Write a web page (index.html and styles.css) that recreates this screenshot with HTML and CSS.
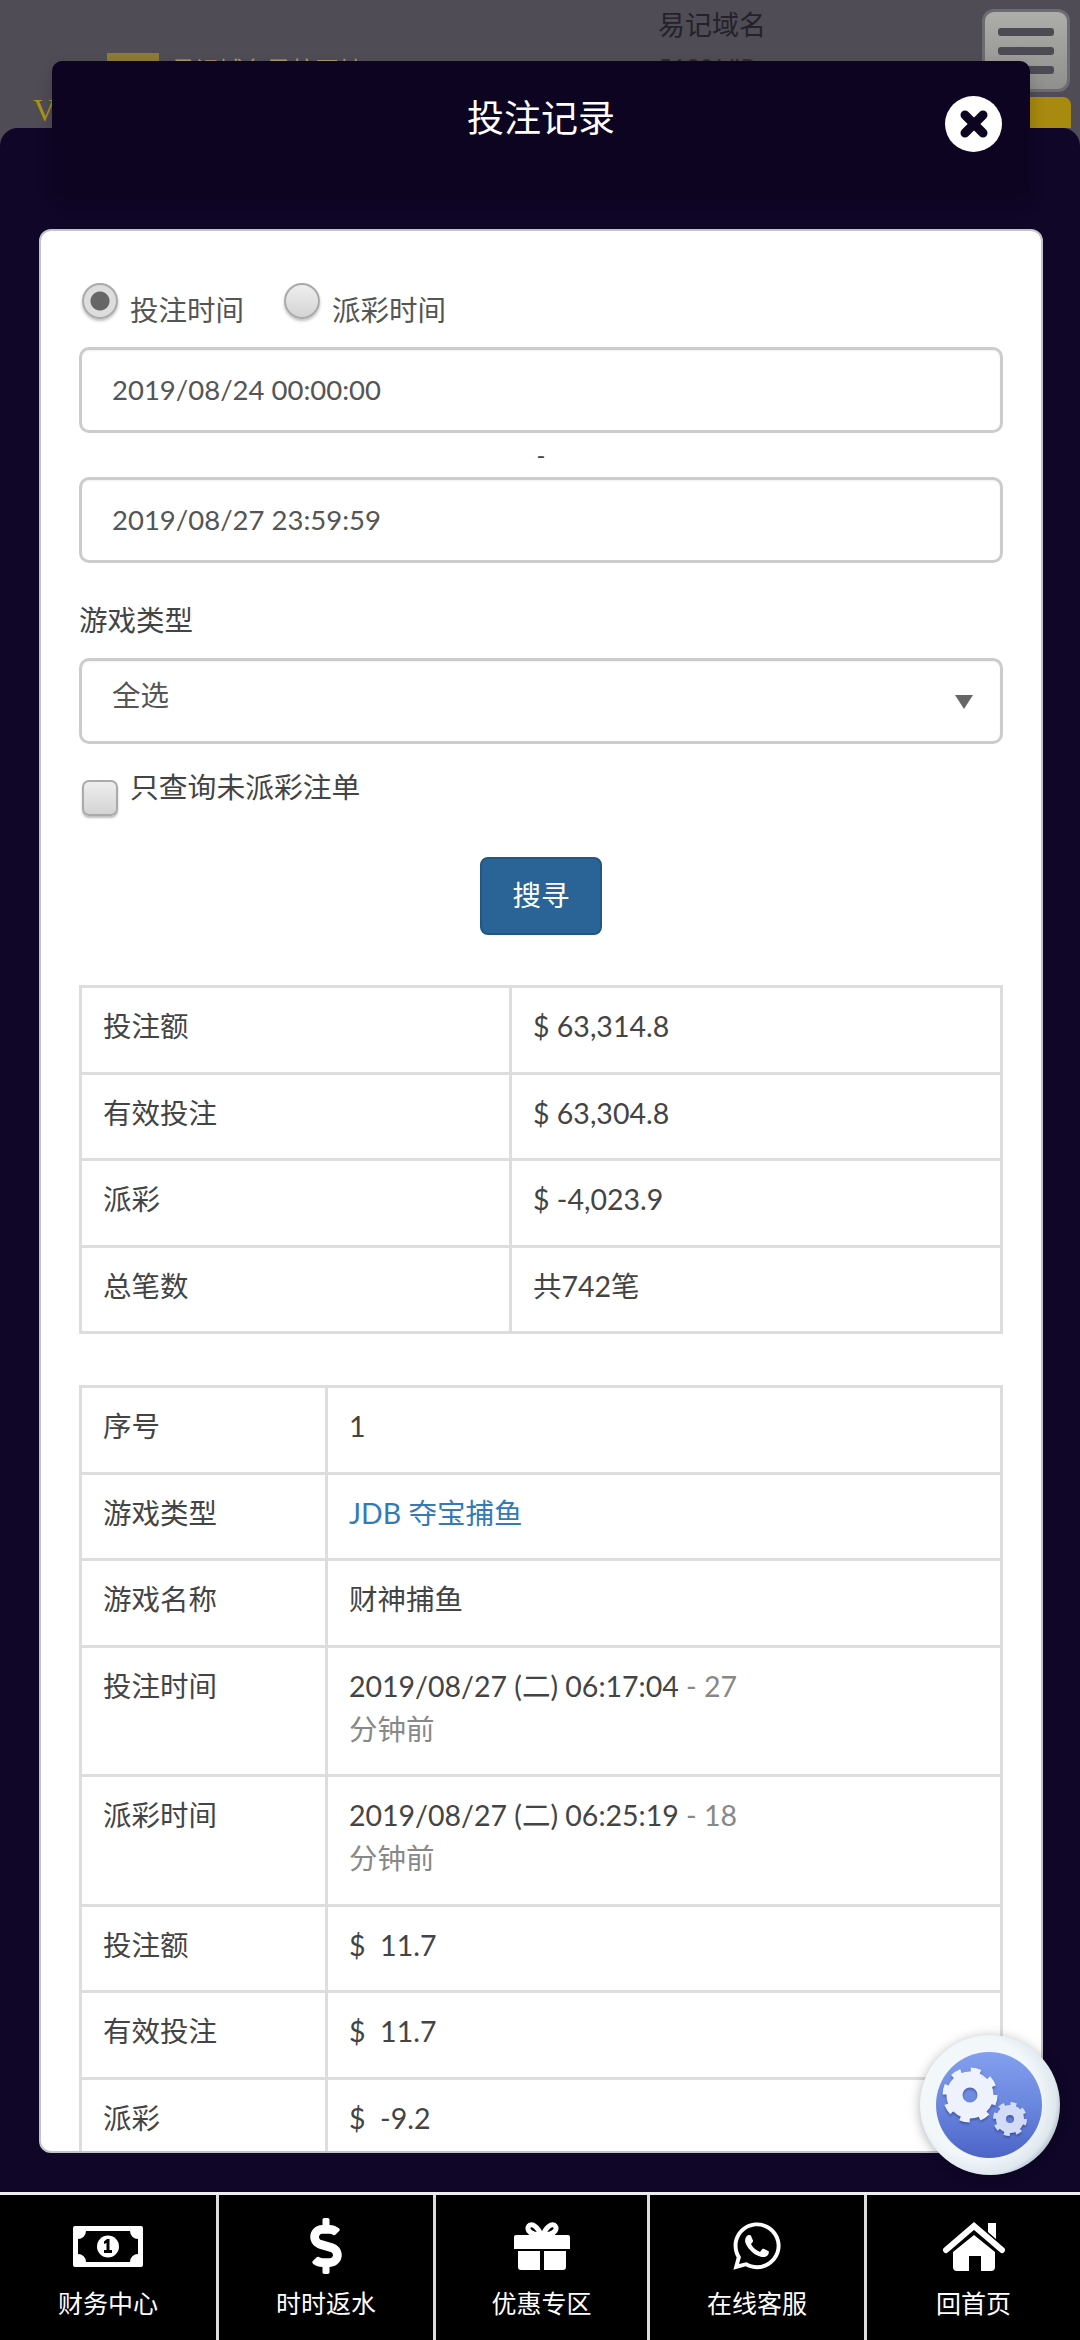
FILE: index.html
```html
<!DOCTYPE html>
<html lang="zh">
<head>
<meta charset="utf-8">
<title>投注记录</title>
<link rel="stylesheet" href="styles.css">
</head>
<body>
<div class="app">
  <header class="topbar">
    <div class="v-mark">V</div>
    <div class="logo"><span class="logo-art"></span><span class="logo-text">易记域名导航网址</span></div>
    <div class="domain"><div class="domain-title">易记域名</div><div class="domain-sub">5130.VIP</div></div>
    <div class="menu-btn"><i></i><i></i><i></i></div>
    <div class="gold-btn"></div>
  </header>

  <div class="modal-head">
    <h1 class="modal-title">投注记录</h1>
    <span class="close-btn">
      <svg viewBox="0 0 30 30" width="30" height="30"><path d="M6 6 24 24M24 6 6 24" fill="none" stroke="#0d0422" stroke-width="9" stroke-linecap="round"/></svg>
    </span>
  </div>

  <main class="sheet">
    <section class="card">
      <div class="radios">
        <label class="radio-item"><input class="radio" type="radio" name="t" checked><span>投注时间</span></label>
        <label class="radio-item"><input class="radio" type="radio" name="t"><span>派彩时间</span></label>
      </div>
      <div class="field date">2019/08/24 00:00:00</div>
      <div class="sep">-</div>
      <div class="field date">2019/08/27 23:59:59</div>
      <div class="type-label">游戏类型</div>
      <div class="field select"><span class="select-text">全选</span><span class="arrow"></span></div>
      <label class="check-row"><input class="check" type="checkbox"><span>只查询未派彩注单</span></label>
      <div class="btn-row"><button class="search" type="button">搜寻</button></div>

      <table class="tbl summary">
        <tr><td>投注额</td><td>$ 63,314.8</td></tr>
        <tr><td>有效投注</td><td>$ 63,304.8</td></tr>
        <tr><td>派彩</td><td>$ -4,023.9</td></tr>
        <tr><td>总笔数</td><td>共742笔</td></tr>
      </table>

      <table class="tbl detail">
        <tr><td>序号</td><td>1</td></tr>
        <tr><td>游戏类型</td><td class="link">JDB 夺宝捕鱼</td></tr>
        <tr><td>游戏名称</td><td>财神捕鱼</td></tr>
        <tr><td>投注时间</td><td>2019/08/27 (二) 06:17:04 <span class="muted">- 27<br>分钟前</span></td></tr>
        <tr><td>派彩时间</td><td>2019/08/27 (二) 06:25:19 <span class="muted">- 18<br>分钟前</span></td></tr>
        <tr><td>投注额</td><td>$&nbsp; 11.7</td></tr>
        <tr><td>有效投注</td><td>$&nbsp; 11.7</td></tr>
        <tr><td>派彩</td><td>$&nbsp; -9.2</td></tr>
      </table>
    </section>
  </main>

  <div class="fab">
    <svg viewBox="0 0 140 140" width="140" height="140">
      <defs>
        <linearGradient id="fabBlue" x1="0" y1="0" x2="0" y2="1">
          <stop offset="0" stop-color="#839fee"/><stop offset=".5" stop-color="#6a87df"/><stop offset="1" stop-color="#4c64c6"/>
        </linearGradient>
        <radialGradient id="fabRim" cx=".42" cy=".45" r=".6">
          <stop offset=".7" stop-color="#f2f7fa"/><stop offset=".92" stop-color="#dfe8ef"/><stop offset="1" stop-color="#b4c0cc"/>
        </radialGradient>
      </defs>
      <circle cx="70" cy="70" r="70" fill="url(#fabRim)"/>
      <circle cx="69" cy="70" r="53" fill="url(#fabBlue)"/>
      <g class="gears">
        <circle cx="50" cy="60" r="15.500" fill="none" stroke="#eef2fd" stroke-width="16"/>
        <circle cx="50" cy="60" r="25" fill="none" stroke="#eef2fd" stroke-width="5" stroke-dasharray="9.820 9.815"/>
        <circle cx="90" cy="84" r="9" fill="none" stroke="#d3dcf7" stroke-width="10"/>
        <circle cx="90" cy="84" r="15" fill="none" stroke="#d3dcf7" stroke-width="4" stroke-dasharray="5.890 5.890"/>
      </g>
    </svg>
  </div>

  <nav class="footer">
    <a class="tab">
      <span class="ico-box"><svg viewBox="0 0 70 41" width="70" height="41"><path fill="#fff" fill-rule="evenodd" d="M2 0h66a2 2 0 0 1 2 2v37a2 2 0 0 1-2 2H2a2 2 0 0 1-2-2V2a2 2 0 0 1 2-2zm11 5a8 8 0 0 1-8 8v15a8 8 0 0 1 8 8h44a8 8 0 0 1 8-8V13a8 8 0 0 1-8-8z"/><circle cx="35" cy="20.500" r="11" fill="#fff"/><path d="M36.500 13v11h2.500v3h-8v-3h2.500v-7l-2.500 1v-2.500l3-2.500z" fill="#000"/></svg></span>
      <span class="tab-label">财务中心</span>
    </a>
    <a class="tab">
      <span class="ico-box"><svg viewBox="0 0 288 512" width="32" height="56"><path fill="#fff" d="M209.200 233.400l-108-31.600C88.700 198.200 80 186.500 80 173.500c0-16.300 13.200-29.500 29.500-29.500h66.300c12.200 0 24.200 3.700 34.200 10.500 6.100 4.100 14.300 3.100 19.500-2l34.800-34c7.100-6.900 6.100-18.400-1.800-24.500C238 74.800 207.400 64.100 176 64V16c0-8.800-7.200-16-16-16h-32c-8.800 0-16 7.200-16 16v48h-2.500C45.800 64-5.400 118.700.5 183.600c4.200 46.100 39.400 83.600 83.800 96.600l102.500 30c12.500 3.700 21.200 15.300 21.200 28.300 0 16.300-13.200 29.500-29.500 29.500h-66.300C100 368 88 364.300 78 357.500c-6.100-4.100-14.300-3.100-19.500 2l-34.800 34c-7.100 6.900-6.100 18.400 1.800 24.500 24.500 19.200 55.100 29.900 86.500 30v48c0 8.800 7.200 16 16 16h32c8.800 0 16-7.200 16-16v-48.200c46.600-.9 90.300-28.600 105.700-72.700 21.500-61.600-14.600-124.800-72.500-141.700z"/></svg></span>
      <span class="tab-label">时时返水</span>
    </a>
    <a class="tab">
      <span class="ico-box"><svg viewBox="0 0 56 48" width="56" height="48"><path fill="#fff" d="M2 13h52a2 2 0 0 1 2 2v12H0V15a2 2 0 0 1 2-2zM4 29h22v19H7a3 3 0 0 1-3-3zM30 29h22v16a3 3 0 0 1-3 3H30z"/><path fill="none" stroke="#fff" stroke-width="5" d="M27 13C24 5 19 2 16 3c-4 2-3 10 11 10zM29 13C32 5 37 2 40 3c4 2 3 10-11 10z"/></svg></span>
      <span class="tab-label">优惠专区</span>
    </a>
    <a class="tab">
      <span class="ico-box"><svg viewBox="0 0 448 512" width="48" height="54"><path fill="#fff" d="M380.900 97.100C339 55.100 283.200 32 223.900 32c-122.400 0-222 99.600-222 222 0 39.100 10.200 77.300 29.600 111L0 480l117.700-30.900c32.400 17.700 68.900 27 106.100 27h.1c122.300 0 224.100-99.600 224.100-222 0-59.300-25.200-115-67.100-157zm-157 341.600c-33.200 0-65.700-8.900-94-25.700l-6.700-4-69.800 18.300L72 359.200l-4.400-7c-18.500-29.400-28.200-63.300-28.200-98.200 0-101.700 82.800-184.500 184.600-184.500 49.300 0 95.600 19.200 130.400 54.100 34.800 34.900 56.200 81.200 56.100 130.500 0 101.800-84.900 184.600-186.600 184.600zm101.200-138.200c-5.500-2.800-32.800-16.200-37.900-18-5.100-1.900-8.800-2.800-12.500 2.800-3.700 5.600-14.300 18-17.600 21.800-3.200 3.700-6.500 4.200-12 1.400-32.600-16.300-54-29.100-75.500-66-5.700-9.800 5.700-9.100 16.300-30.300 1.800-3.700.9-6.900-.5-9.700-1.400-2.800-12.500-30.100-17.100-41.200-4.500-10.800-9.100-9.300-12.500-9.500-3.200-.2-6.900-.2-10.600-.2-3.700 0-9.700 1.400-14.800 6.900-5.100 5.600-19.400 19-19.400 46.300 0 27.300 19.900 53.700 22.600 57.400 2.800 3.700 39.100 59.700 94.800 83.800 35.200 15.200 49 16.500 66.600 13.900 10.700-1.600 32.800-13.400 37.400-26.400 4.600-13 4.600-24.100 3.200-26.400-1.300-2.500-5-3.900-10.500-6.600z"/></svg></span>
      <span class="tab-label">在线客服</span>
    </a>
    <a class="tab">
      <span class="ico-box"><svg viewBox="0 0 62 49" width="62" height="49"><path fill="none" stroke="#fff" stroke-width="6" stroke-linecap="round" d="M3 28 31 4l28 24"/><path fill="#fff" d="M45 1h8v16l-8-7zM31 13l21 17v15a4 4 0 0 1-4 4H38V34H26v15H14a4 4 0 0 1-4-4V30z"/></svg></span>
      <span class="tab-label">回首页</span>
    </a>
  </nav>
</div>
</body>
</html>
```
FILE: styles.css
```css
* { box-sizing: border-box; }
html, body { margin: 0; padding: 0; }
body {
  font-family: "Lato", "Noto Sans CJK SC", sans-serif;
  font-size: 28.500px;
  color: #555;
}
.app {
  position: relative;
  width: 1080px;
  height: 2340px;
  overflow: hidden;
  display: flex;
  flex-direction: column;
  background: #4f4c56;
}

/* dimmed page behind the modal */
.topbar {
  position: relative;
  flex: none;
  height: 128px;
  overflow: hidden;
}
.v-mark { position: absolute; left: 33px; top: 90px; color: #a8941a; font-family: "Liberation Serif", serif; font-size: 32px; line-height: 40px; }
.logo { position: absolute; left: 107px; top: 53px; display: flex; gap: 12px; align-items: flex-start; color: #a89a66; font-size: 24px; line-height: 24px; }
.logo-art { width: 52px; height: 30px; background: #8d7a33; }
.logo-text { margin-top: 5px; }
.domain { position: absolute; left: 658px; top: 6px; color: #24222a; font-size: 27px; }
.domain-title { line-height: 38px; }
.domain-sub { line-height: 30px; margin-top: 8px; color: #2e2c33; font-size: 24px; }
.menu-btn {
  position: absolute; left: 982px; top: 9px; width: 88px; height: 83px;
  background: linear-gradient(#adadaa, #8f8f8d);
  border: 3px solid #6d6b72;
  border-radius: 12px;
  display: flex; flex-direction: column; align-items: center; gap: 11px;
  padding-top: 16px;
}
.menu-btn i { width: 56px; height: 8px; border-radius: 3px; background: #4c4a52; }
.gold-btn { position: absolute; left: 1010px; top: 97px; width: 61px; height: 40px; background: #a88a0e; border-radius: 8px; }

.modal-head {
  position: absolute;
  left: 52px; top: 61px;
  width: 978px; height: 134px;
  background: #0d0422;
  border-radius: 10px;
  box-shadow: 0 8px 16px rgba(0,0,0,.2);
  z-index: 2;
}
.modal-title {
  margin: 0;
  text-align: center;
  color: #fff;
  font-size: 37px;
  font-weight: 400;
  line-height: 56px;
  padding-top: 29px;
}
.close-btn {
  position: absolute; left: 893px; top: 35px;
  width: 57px; height: 56px; border-radius: 50%;
  background: #fff;
  display: flex; align-items: center; justify-content: center;
}

.sheet {
  flex: 1;
  min-height: 0;
  display: flex;
  background: #0f0628;
  border-radius: 18px 18px 0 0;
  padding: 101px 37px 39px 39px;
}
.card {
  flex: 1;
  min-width: 0;
  background: #fff;
  border: 2px solid #c4c3cc;
  border-radius: 12px;
  overflow: hidden;
  padding: 0 38px;
}

.radios { display: flex; gap: 37px; height: 116px; padding-top: 52px; }
.radio-item { display: flex; align-items: flex-start; gap: 12px; }
.radio-item span { line-height: 42px; margin-top: 6px; }
.radio {
  appearance: none; -webkit-appearance: none;
  margin: 0 0 0 3px; width: 36px; height: 36px; border-radius: 50%;
  border: 2px solid #aaa;
  background: linear-gradient(#eee, #d4d4d4);
  box-shadow: 0 2px 3px rgba(0,0,0,.25);
}
.radio:checked { background: radial-gradient(circle, #666 0 9px, #ddd 10px 100%); }

.field {
  height: 86px;
  border: 3px solid #ccc;
  border-radius: 10px;
  padding: 0 30px;
  display: flex; align-items: center;
  color: #555;
  box-shadow: inset 0 1px 2px rgba(0,0,0,.06);
}
.date { font-size: 27.500px; padding-bottom: 2px; }
.sep { height: 44px; line-height: 44px; text-align: center; font-size: 24px; color: #444; }
.type-label { margin-top: 37px; height: 40px; line-height: 40px; color: #444; }
.select { margin-top: 18px; justify-content: space-between; align-items: flex-start; padding-right: 27px; }
.select-text { line-height: 42px; margin-top: 13px; }
.arrow { width: 0; height: 0; margin-top: 34px; border-left: 9px solid transparent; border-right: 9px solid transparent; border-top: 14px solid #666; }

.check-row { display: flex; align-items: flex-start; gap: 12px; height: 72px; margin-top: 22px; font-size: 28.800px; }
.check-row span { line-height: 42px; color: #444; }
.check {
  appearance: none; -webkit-appearance: none;
  margin: 14px 0 0 3px; width: 36px; height: 36px; border-radius: 7px;
  border: 2px solid #aaa;
  background: linear-gradient(#eee, #d4d4d4);
  box-shadow: 0 2px 2px rgba(0,0,0,.25);
}
.btn-row { display: flex; justify-content: center; margin-top: 19px; }
.search {
  width: 122px; height: 78px;
  background: #2a6496; border: 2px solid #245682; border-radius: 8px;
  color: #fff; font: inherit;
  padding: 0 0 6px;
}

.tbl {
  width: 100%;
  border-collapse: collapse;
  table-layout: fixed;
  color: #444;
}
.tbl td {
  border: 3px solid #ddd;
  padding: 17px 21px 23.500px;
  line-height: 43px;
  vertical-align: top;
}
.summary { margin-top: 50px; }
.summary td:first-child { width: 430px; }
.detail { margin-top: 51px; }
.detail td:first-child { width: 246px; }
.link { color: #337ab7; }
.muted { color: #888; }

.fab { position: absolute; left: 920px; top: 2035px; width: 140px; height: 140px; z-index: 3; filter: drop-shadow(0 2px 6px rgba(0,0,0,.3)); }
.gears { filter: drop-shadow(0 2px 1px rgba(40,50,120,.5)); }

.footer {
  flex: none;
  height: 148px;
  display: grid;
  grid-template-columns: 219px 217px 214px 217px 213px;
  background: #000;
  border-top: 3px solid #ededf0;
}
.tab {
  display: flex; flex-direction: column; align-items: center;
  color: #fff;
  border-right: 3px solid #ddd;
  padding-top: 21px;
  font-size: 25px;
}
.tab:last-child { border-right: 0; }
.ico-box { height: 60px; flex: none; display: flex; align-items: center; justify-content: center; }
.tab-label { margin-top: 9px; line-height: 36px; }
```
